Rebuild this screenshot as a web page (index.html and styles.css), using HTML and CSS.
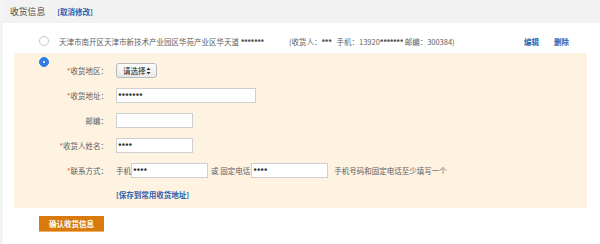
FILE: index.html
```html
<!DOCTYPE html>
<html>
<head>
<meta charset="utf-8">
<link rel="stylesheet" href="styles.css">
</head>
<body>
<div class="page">
  <div class="head">
    <span class="head-title">收货信息</span>
    <a class="link">[取消修改]</a>
  </div>
  <div class="addr-row">
    <span class="radio"></span>
    <span class="addr-text">天津市南开区天津市新技术产业园区华苑产业区华天道 <span class="stars">*******</span></span>
    <span class="addr-info">(收货人：<span class="stars">***</span>&nbsp;&nbsp; 手机：13920<span class="stars">*******</span> 邮编：300384)</span>
    <a class="link op">编辑</a>
    <a class="link op">删除</a>
  </div>
  <div class="edit">
    <span class="radio on"></span>
    <div class="form">
      <div class="row">
        <label class="lbl"><i>*</i>收货地区：</label>
        <div class="select">请选择 <svg width="5" height="8" viewBox="0 0 5 8"><path d="M2.5 0.5 L4.5 3 L0.5 3 Z M2.5 7.5 L4.5 5 L0.5 5 Z" fill="#333"/></svg></div>
      </div>
      <div class="row">
        <label class="lbl"><i>*</i>收货地址：</label>
        <div class="inp w140">*******</div>
      </div>
      <div class="row">
        <label class="lbl">邮编：</label>
        <div class="inp w77"></div>
      </div>
      <div class="row">
        <label class="lbl"><i>*</i>收货人姓名：</label>
        <div class="inp w77">****</div>
      </div>
      <div class="row">
        <label class="lbl"><i>*</i>联系方式：</label>
        <span class="txt">手机</span>
        <div class="inp w77">****</div>
        <span class="txt sp">或 固定电话</span>
        <div class="inp w77">****</div>
        <span class="txt note">手机号码和固定电话至少填写一个</span>
      </div>
      <div class="row linkrow">
        <span class="lbl"></span>
        <a class="link">[保存到常用收货地址]</a>
      </div>
    </div>
  </div>
  <div class="btn">确认收货信息</div>
</div>
</body>
</html>
```
FILE: styles.css
```css
html, body {
  margin: 0;
  padding: 0;
  background: #fff;
}
body {
  font-family: "Noto Sans CJK SC", "DejaVu Sans", sans-serif;
  font-size: 7.5px;
  color: #606060;
}
.page {
  width: 600px;
  height: 244px;
  border-left: 3px solid #f4f4f4;
  box-sizing: border-box;
}
.head {
  height: 23px;
  background: #f2f2f2;
  display: flex;
  align-items: center;
  padding-left: 7px;
  gap: 12px;
}
.head-title {
  font-size: 8.8px;
  color: #505050;
}
.link {
  color: #2a62b0;
  font-weight: bold;
  font-size: 7.5px;
  text-decoration: none;
}
.addr-row {
  display: flex;
  align-items: center;
  height: 16px;
  margin-top: 10px;
  padding-left: 36px;
}
.radio {
  width: 8px;
  height: 8px;
  border: 1px solid #c8c8c8;
  border-radius: 50%;
  background: #fff;
  flex: none;
  box-sizing: content-box;
}
.radio.on {
  border-color: #2f7de1;
  background: #2f7de1;
  position: relative;
}
.radio.on::after {
  content: "";
  position: absolute;
  left: 3px;
  top: 3px;
  width: 2px;
  height: 2px;
  border-radius: 50%;
  background: #fff;
}
.addr-text {
  margin-left: 10px;
  width: 230px;
  white-space: nowrap;
}
.stars {
  color: #444;
  font-weight: bold;
  letter-spacing: -0.5px;
}
.addr-info {
  width: 235px;
  white-space: nowrap;
}
.op {
  margin-right: 15px;
}
.edit {
  margin-top: 4px;
  margin-left: 11px;
  width: 573px;
  height: 155px;
  background: #fef2e1;
  display: flex;
  align-items: flex-start;
}
.edit .radio {
  margin-top: 4px;
  margin-left: 25px;
}
.form {
  margin-top: 10px;
  display: flex;
  flex-direction: column;
  gap: 10px;
}
.row {
  display: flex;
  align-items: center;
  height: 15px;
}
.lbl {
  width: 59px;
  text-align: right;
  margin-right: 8px;
  white-space: nowrap;
}
.lbl i {
  font-style: normal;
  color: #e0442a;
}
.select {
  width: 41px;
  height: 15px;
  box-sizing: border-box;
  border: 1px solid #b9b9b9;
  border-radius: 3px;
  background: linear-gradient(#fdfdfd, #e8e8e8);
  color: #222;
  display: flex;
  align-items: center;
  justify-content: space-between;
  padding: 0 5px 0 6px;
}
.inp {
  height: 15px;
  box-sizing: border-box;
  border: 1px solid #cfcfcf;
  background: #fff;
  color: #222;
  font-weight: bold;
  display: flex;
  align-items: center;
  padding-left: 1px;
  letter-spacing: -0.3px;
}
.w140 { width: 140px; }
.w77 { width: 77px; }
.txt { white-space: nowrap; }
.sp { margin: 0 1px 0 3px; }
.note { margin-left: 6px; }
.linkrow {
  height: 12px;
}
.btn {
  margin-top: 8px;
  margin-left: 36px;
  width: 65px;
  height: 16px;
  box-sizing: border-box;
  background: #d87a0e;
  border-bottom: 1px solid #f0b060;
  color: #fff;
  font-weight: bold;
  display: flex;
  align-items: center;
  justify-content: center;
}
```
